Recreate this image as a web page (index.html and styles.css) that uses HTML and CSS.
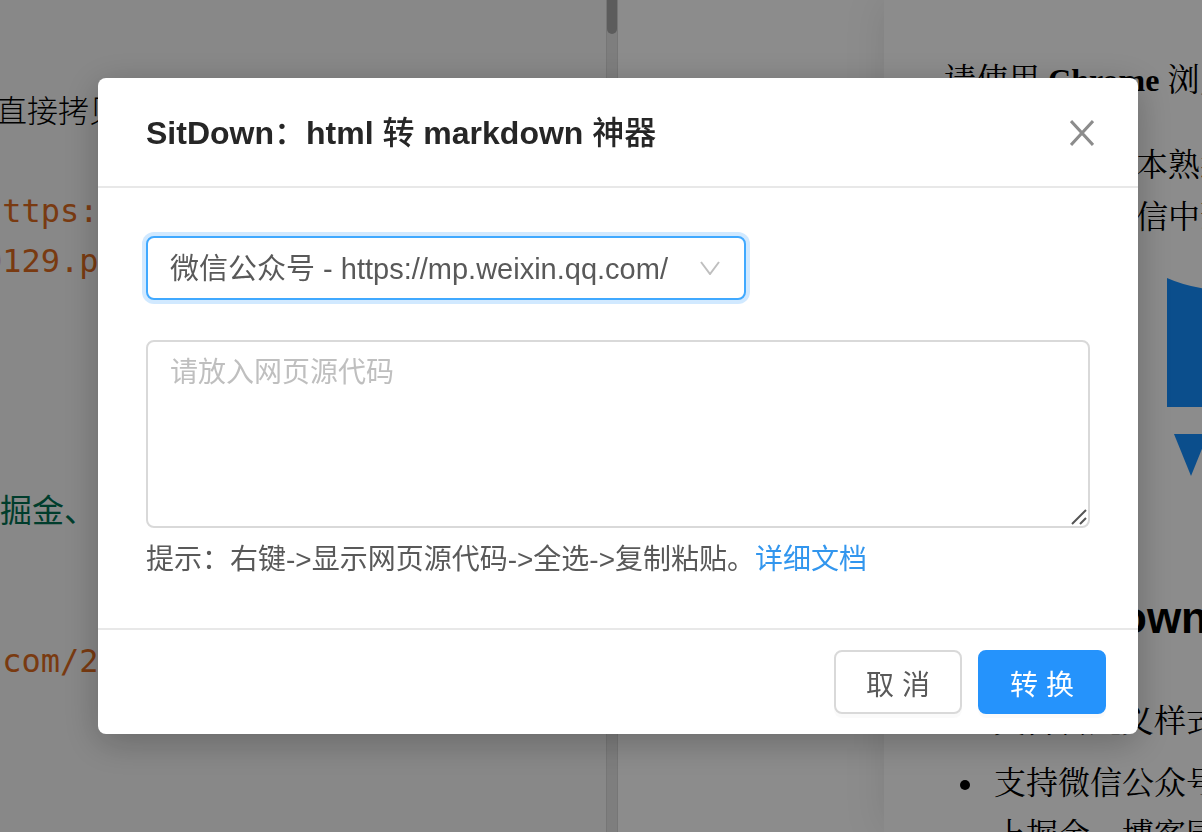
FILE: index.html
```
<!DOCTYPE html>
<html lang="zh-CN">
	<head>
		<meta charset="utf-8" />
		<title>SitDown：html 转 markdown 神器</title>
		<link rel="stylesheet" href="styles.css">
	</head>
	<body>
		<main class="workspace">
			<section class="editor">
				<div class="code">
					<p class="line cjk">直接拷贝</p>
					<p class="line"></p>
					<p class="line url">https:</p>
					<p class="line url">0129.p</p>
					<p class="line"></p>
					<p class="line"></p>
					<p class="line"></p>
					<p class="line"></p>
					<p class="line quote">掘金、</p>
					<p class="line"></p>
					<p class="line"></p>
					<p class="line url">.com/2</p>
				</div>
			</section>
			<div class="scrollbar"><div class="thumb"></div></div>
			<section class="preview">
				<article class="page">
					<p>请使用 <strong>Chrome</strong> 浏览器。</p>
					<p>请阅读下方文本熟悉排版<br />可以在这里微信中预览</p>
					<svg class="picture" width="100" height="200" viewBox="0 0 100 200">
						<path d="M0 0Q40 18 100 10V129H0Z" />
						<path d="M7 156H41L24 198Z" />
					</svg>
					<h2>关于SitDown</h2>
					<ul>
						<li>支持自定义样式的文章</li>
						<li>支持微信公众号、知乎<br />上掘金、博客园</li>
					</ul>
				</article>
			</section>
		</main>

		<div class="mask">
			<div class="modal" role="dialog" aria-labelledby="modalTitle">
				<header class="modal-header">
					<h1 id="modalTitle">SitDown<span class="zh">：</span>html <span class="zh">转</span> markdown <span class="zh">神器</span></h1>
					<button class="close" type="button" aria-label="关闭">
						<svg width="24" height="26" viewBox="0 0 24 26">
							<path d="M1 1L23 25M23 1L1 25" />
						</svg>
					</button>
				</header>
				<div class="modal-body">
					<div class="select-box">
						<select id="site" aria-label="网站">
							<option>微信公众号 - https://mp.weixin.qq.com/</option>
						</select>
						<svg class="arrow" width="20" height="14" viewBox="0 0 20 14">
							<path d="M1 1L10 13L19 1" />
						</svg>
					</div>
					<div class="source-box">
						<textarea id="source" aria-label="网页源代码" placeholder="请放入网页源代码"></textarea>
						<svg class="grip" width="16" height="16" viewBox="0 0 16 16">
							<path d="M1 15L15 1M9 15L15 9" />
						</svg>
					</div>
					<p class="hint">提示：右键-&gt;显示网页源代码-&gt;全选-&gt;复制粘贴。<a href="#">详细文档</a></p>
				</div>
				<footer class="modal-footer">
					<button class="btn" type="button">取 消</button>
					<button class="btn primary" type="button">转 换</button>
				</footer>
			</div>
		</div>
	</body>
</html>
```
FILE: styles.css
```
* {
	box-sizing: border-box;
}
body {
	margin: 0;
	height: 100vh;
	overflow: hidden;
	font-family: "Liberation Sans", "Noto Sans CJK SC", sans-serif;
	font-size: 28px;
	color: #595959;
}
p,
h1,
h2,
ul {
	margin: 0;
	padding: 0;
}

/* editor and preview behind the dialog */
.workspace {
	display: flex;
	height: 100%;
}
.editor {
	flex: 1;
	overflow: hidden;
	padding-top: 86px;
	background: #f8f8f8;
}
.code {
	margin-left: -17px;
	font-family: "DejaVu Sans Mono", "Noto Sans CJK SC", monospace;
	font-size: 32px;
	color: #000;
}
.line {
	height: 50px;
	line-height: 50px;
	white-space: pre;
}
.cjk {
	padding-left: 13px;
	font-size: 31px;
	font-weight: 300;
}
.url {
	color: #dd6b20;
}
.quote {
	padding-left: 17px;
	color: #007050;
}
.scrollbar {
	width: 12px;
	background: #e6e6e6;
	border-left: 1px solid #d8d8d8;
	border-right: 1px solid #d8d8d8;
}
.thumb {
	height: 34px;
	border-radius: 0 0 6px 6px;
	background: #a8a8a8;
}
.preview {
	width: 584px;
	padding-left: 266px;
	overflow: hidden;
	background: #fff;
}
.page {
	width: 750px;
	height: 100%;
	padding: 54px 60px;
	overflow: hidden;
	box-shadow: 0 0 40px rgba(0, 0, 0, 0.1);
	font-family: "Liberation Serif", "Noto Serif CJK SC", "Noto Sans CJK SC", serif;
	font-size: 32px;
	line-height: 52px;
	color: #000;
}
.page p {
	margin-bottom: 33px;
}
.picture {
	display: block;
	margin: 35px 0 0 223px;
	fill: #148eff;
}
.page h2 {
	margin: 112px 0 49px;
	font-family: "Liberation Sans", "Noto Sans CJK SC", sans-serif;
	font-size: 44px;
	line-height: 56px;
}
.page ul {
	padding-left: 42px;
}
.page li {
	margin-bottom: 10px;
	padding-left: 8px;
}

/* dialog */
.mask {
	position: fixed;
	inset: 0;
	display: flex;
	align-items: flex-start;
	padding: 78px 64px 0 98px;
	background: rgba(0, 0, 0, 0.45);
}
.modal {
	flex: 1;
	border-radius: 8px;
	background: #fff;
	box-shadow: 0 8px 36px rgba(0, 0, 0, 0.25);
}
.modal-header {
	display: flex;
	justify-content: space-between;
	align-items: center;
	padding: 33px 44px 31px 48px;
	border-bottom: 2px solid #e8e8e8;
}
.modal-header h1 {
	font-size: 32px;
	font-weight: 600;
	line-height: 44px;
	color: #262626;
}
.modal-header .zh {
	font-weight: 500;
}
.close {
	display: flex;
	padding: 0;
	border: none;
	background: none;
	cursor: pointer;
}
.close svg,
.arrow,
.grip {
	fill: none;
	stroke: #8c8c8c;
	stroke-width: 3;
}
.modal-body {
	padding: 48px;
}
.select-box {
	position: relative;
	width: 600px;
	max-width: 100%;
	margin-bottom: 40px;
}
select {
	display: block;
	width: 100%;
	height: 64px;
	padding: 2px 60px 0 22px;
	border: 2px solid #40a9ff;
	border-radius: 8px;
	outline: none;
	appearance: none;
	background: #fff;
	box-shadow: 0 0 0 4px rgba(24, 144, 255, 0.2);
	font-family: inherit;
	font-size: 29px;
	color: inherit;
}
.arrow {
	position: absolute;
	right: 26px;
	top: 25px;
	stroke: #bfbfbf;
	stroke-width: 2;
	pointer-events: none;
}
.source-box {
	position: relative;
}
textarea {
	display: block;
	width: 100%;
	height: 188px;
	padding: 10px 22px;
	border: 2px solid #d9d9d9;
	border-radius: 8px;
	outline: none;
	resize: none;
	font: inherit;
	line-height: 42px;
	color: inherit;
}
textarea::placeholder {
	color: #bfbfbf;
}
.grip {
	position: absolute;
	right: 3px;
	bottom: 3px;
	stroke: #555;
	stroke-width: 2;
	pointer-events: none;
}
.hint {
	padding-top: 12px;
	line-height: 40px;
}
a {
	color: #3296ee;
	text-decoration: none;
}
.modal-footer {
	display: flex;
	justify-content: flex-end;
	gap: 16px;
	padding: 20px 32px;
	border-top: 2px solid #e8e8e8;
}
.btn {
	width: 128px;
	height: 64px;
	padding: 2px 0 0;
	border: 2px solid #d9d9d9;
	border-radius: 8px;
	background: #fff;
	box-shadow: 0 4px 0 rgba(0, 0, 0, 0.02);
	font: inherit;
	color: inherit;
	cursor: pointer;
}
.primary {
	border-color: #2593fc;
	background: #2593fc;
	color: #fff;
}
```
